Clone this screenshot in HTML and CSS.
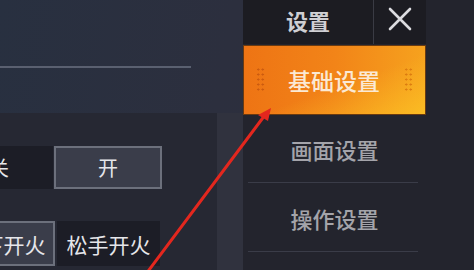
FILE: index.html
```html
<!DOCTYPE html>
<html lang="zh">
<head>
<meta charset="utf-8">
<link rel="stylesheet" href="styles.css">
</head>
<body>
<div class="page">
  <main class="main">
    <div class="top">
      <div class="rule"></div>
    </div>
    <div class="lower">
      <section class="panel">
        <div class="row row-a">
          <div class="opt">关</div>
          <div class="opt on">开</div>
        </div>
        <div class="row row-b">
          <div class="opt on">按下开火</div>
          <div class="opt">松手开火</div>
        </div>
      </section>
      <div class="strip"></div>
    </div>
  </main>
  <aside class="side">
    <div class="head">
      <div class="title">设置</div>
      <div class="close">
        <svg width="24" height="24" viewBox="0 0 24 24"><path d="M2 2 L22 22 M22 2 L2 22" stroke="#dcdce0" stroke-width="2.6" stroke-linecap="round" fill="none"/></svg>
      </div>
    </div>
    <div class="item active">
      <span class="dots"></span>
      <span class="label">基础设置</span>
      <span class="dots dots-r"></span>
    </div>
    <div class="item">画面设置</div>
    <div class="item">操作设置</div>
  </aside>
</div>
<svg class="arrow" width="474" height="270" viewBox="0 0 474 270">
  <line x1="146" y1="274" x2="265" y2="115" stroke="#e3271e" stroke-width="3" stroke-linecap="round"/>
  <polygon points="271,108 258,115 268,121" fill="#e3271e"/>
</svg>
</body>
</html>
```

FILE: styles.css
```css
html, body {
  margin: 0;
  padding: 0;
}
body {
  width: 474px;
  height: 270px;
  overflow: hidden;
  position: relative;
  background: linear-gradient(100deg, #283040 0%, #2c2f3e 45%, #2e2f3b 100%);
  font-family: "Noto Sans CJK SC", "Noto Sans", sans-serif;
}
.page {
  display: flex;
  width: 474px;
  height: 270px;
}
.main {
  width: 243px;
  display: flex;
  flex-direction: column;
  flex: none;
}
.top {
  height: 113px;
  padding-top: 66px;
  box-sizing: border-box;
}
.rule {
  width: 191px;
  height: 2px;
  background: #5a6070;
}
.lower {
  flex: 1;
  display: flex;
}
.panel {
  width: 217px;
  background: #262833;
  padding-top: 33px;
  box-sizing: border-box;
  display: flex;
  flex-direction: column;
  gap: 32px;
  overflow: hidden;
}
.strip {
  flex: 1;
  background: #30323e;
}
.row {
  display: flex;
  gap: 1px;
}
.row-a { margin-left: -55px; }
.row-b { margin-left: -48px; gap: 2px; }
.opt {
  flex: none;
  width: 108px;
  height: 43px;
  box-sizing: border-box;
  background: #1c1d26;
  color: #e6e6ea;
  font-size: 20px;
  display: flex;
  align-items: center;
  justify-content: center;
}
.row-b .opt { width: 103px; height: 45px; font-size: 21px; }
.opt.on {
  background: #3a3d4a;
  border: 2px solid #6c707c;
}
.side {
  flex: 1;
  background: #23242d;
  display: flex;
  flex-direction: column;
}
.head {
  display: flex;
  height: 44px;
  width: 183px;
}
.title {
  width: 130px;
  background: #1c1c22;
  color: #cfcfd3;
  font-size: 22px;
  font-weight: 700;
  display: flex;
  align-items: center;
  justify-content: center;
  padding-bottom: 4px;
  box-sizing: border-box;
}
.close {
  flex: 1;
  background: #1c1c22;
  border-left: 1px solid #3a3b44;
  display: flex;
  align-items: center;
  justify-content: center;
  padding-bottom: 6px;
  box-sizing: border-box;
}
.item {
  width: 183px;
  height: 69px;
  display: flex;
  align-items: center;
  justify-content: center;
  color: #a4a4aa;
  font-size: 22px;
  font-weight: 500;
  position: relative;
  box-sizing: border-box;
  border-bottom: 1px solid transparent;
  background-image: linear-gradient(#3a3c48, #3a3c48);
  background-size: 170px 1px;
  background-position: 5px 100%;
  background-repeat: no-repeat;
}
.item.active {
  margin-top: 1px;
  height: 70px;
  justify-content: space-between;
  padding: 0 12px;
  color: #fbe9d4;
  border: 1px solid #6a3a10;
  background: linear-gradient(160deg, rgba(255,210,40,0) 55%, rgba(255,210,40,0.55) 100%),
              linear-gradient(90deg, #ee7414 0%, #f28418 50%, #f6a21e 100%);
  font-weight: 500;
  font-size: 23px;
}
.label {
  padding-right: 1px;
}
.dots {
  width: 9px;
  height: 26px;
  background-image: radial-gradient(circle, #c8580e 0.9px, transparent 1.3px);
  background-size: 4.5px 5px;
  opacity: 0.9;
}
.dots-r {
  background-image: radial-gradient(circle, #d9780e 0.9px, transparent 1.3px);
}
.arrow {
  position: absolute;
  left: 0;
  top: 0;
  pointer-events: none;
}
```
